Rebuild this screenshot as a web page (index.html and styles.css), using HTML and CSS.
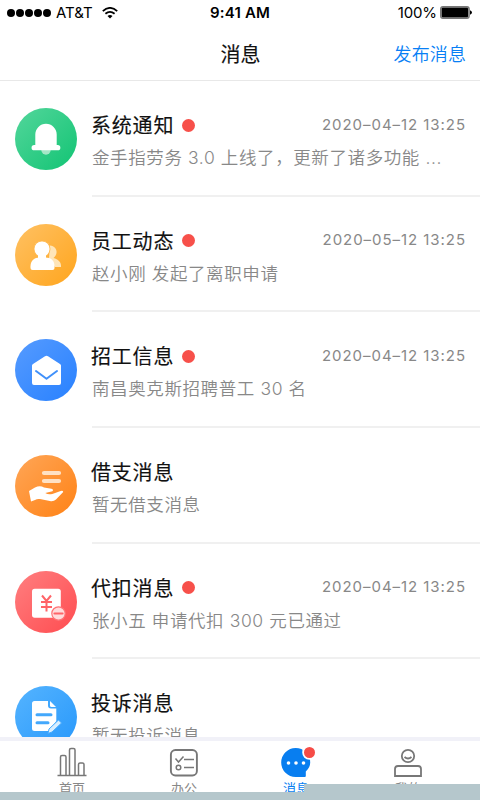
FILE: index.html
```html
<!DOCTYPE html>
<html lang="zh-CN">
<head>
<meta charset="utf-8">
<title>消息</title>
<link rel="stylesheet" href="styles.css">
</head>
<body>
<div class="screen">
  <header class="status">
    <div class="carrier">
      <span class="signal"><i></i><i></i><i></i><i></i><i></i></span>
      <span class="network">AT&amp;T</span>
      <svg class="wifi" width="16" height="12" viewBox="0 0 16 12" fill="none" stroke="#000" stroke-width="1.8"><path d="M.8 4.1Q8-2.3 15.2 4.1M3.4 6.8Q8 2.9 12.6 6.8"/><path d="M5.5 9Q8 7 10.5 9L8 11.5Z" fill="#000" stroke="none"/></svg>
    </div>
    <div class="clock">9:41 AM</div>
    <div class="power"><span>100%</span>
      <svg width="32" height="13" viewBox="0 0 32 13"><rect x=".6" y=".6" width="28.6" height="11.8" rx="2.4" fill="#999" stroke="#777" stroke-width="1.2"/><rect x="1.800" y="1.800" width="26.200" height="9.400" rx="1" /><path d="M30 4.3Q32 5 32 6.5T30 8.7Z"/></svg>
    </div>
  </header>
  <nav class="nav"><span></span><h1>消息</h1><a class="publish">发布消息</a></nav>

  <main class="list">
    <article class="item">
      <div class="icon green"><svg viewBox="0 0 62 62"><circle cx="31" cy="42" r="4.7" fill="#a5e6c6"/><path d="M20.3 37V26.500a10.7 10.7 0 0 1 21.400 0V37h1a2.6 2.6 0 0 1 0 5.3H19.2a2.6 2.6 0 0 1 0-5.3z" fill="#fff"/></svg></div>
      <div class="body"><div class="top"><h2>系统通知</h2><i class="dot"></i><time>2020–04–12 13:25</time></div><p>金手指劳务 3.0 上线了，更新了诸多功能 ...</p></div>
    </article>
    <article class="item">
      <div class="icon amber"><svg viewBox="0 0 62 62"><path d="M35 21.500c7.500 1 8.500 8.500 3.500 12.500 5 1.500 8 4 7.500 9H40l-6-9z" fill="#ffe5b8"/><path d="M15.500 44v-1.700c0-6 4-8.800 9-8.800h6c5.500 0 9 2.800 9 8.800V44a2 2 0 0 1-2 2h-20a2 2 0 0 1-2-2z" fill="#fff"/><circle cx="27" cy="25" r="8" fill="#fff" stroke="#ffb648" stroke-width=".8"/><path d="M23 30h8v5h-8z" fill="#fff"/></svg></div>
      <div class="body"><div class="top"><h2>员工动态</h2><i class="dot"></i><time>2020–05–12 13:25</time></div><p>赵小刚 发起了离职申请</p></div>
    </article>
    <article class="item">
      <div class="icon blue"><svg viewBox="0 0 62 62"><path d="M17 26.500q0-1 1-1.600l12-7.600q1.500-.9 3 0l12 7.600q1 .6 1 1.600V44q0 2-2 2H19q-2 0-2-2z" fill="#fff"/><path d="M21 32l10.500 7.700L42 32" fill="none" stroke="#4090fa" stroke-width="2" stroke-linecap="round" stroke-linejoin="round"/></svg></div>
      <div class="body"><div class="top"><h2>招工信息</h2><i class="dot"></i><time>2020–04–12 13:25</time></div><p>南昌奥克斯招聘普工 30 名</p></div>
    </article>
    <article class="item">
      <div class="icon orange"><svg viewBox="0 0 62 62"><path d="M29 18h15M29 26h15" stroke="#ffe1c4" stroke-width="4.200" stroke-linecap="round"/><path d="M14 36l6-3.500q5-2.500 9 0l7.500 1.200q2.500.8.900 2.600l-7.100 1.700q3 2 7 .9L45 36.200q3-1.200 3.200.8L41 44.500q-2 2-5 1.800L25 44q-3-.4-5 1l-4 1.500z" fill="#fff"/></svg></div>
      <div class="body"><div class="top"><h2>借支消息</h2></div><p>暂无借支消息</p></div>
    </article>
    <article class="item">
      <div class="icon red"><svg viewBox="0 0 62 62"><rect x="17" y="17.700" width="28.800" height="29" rx="2.700" fill="#fff"/><path d="M27 24.500l4.500 5.500 4.500-5.500M31.500 30v10.500M26 31h11M26 36h11" fill="none" stroke="#ff6468" stroke-width="2"/><circle cx="43.500" cy="42.500" r="6.700" fill="#ffdcdc" stroke="#ff7376" stroke-width="1.200"/><path d="M39.500 42.500h8" stroke="#ff6468" stroke-width="2.200" stroke-linecap="round"/></svg></div>
      <div class="body"><div class="top"><h2>代扣消息</h2><i class="dot"></i><time>2020–04–12 13:25</time></div><p>张小五 申请代扣 300 元已通过</p></div>
    </article>
    <article class="item">
      <div class="icon sky"><svg viewBox="0 0 62 62"><path d="M19.500 15H33v4.500a3 3 0 0 0 3 3h5.300V35L34 45H19.500a2.500 2.500 0 0 1-2.500-2.500v-25a2.500 2.500 0 0 1 2.500-2.500z" fill="#fff"/><path d="M35 15l6 6h-4.500q-1.500 0-1.500-1.500z" fill="#fff"/><path d="M22 28.800h14M22 36.700h11" stroke="#43a8fc" stroke-width="3" stroke-linecap="round"/><path d="M33 47.500l1-4.500 9.500-9 3 3L37 46z" fill="#d8eeff" stroke="#45aafd"/></svg></div>
      <div class="body"><div class="top"><h2>投诉消息</h2></div><p>暂无投诉消息</p></div>
    </article>
  </main>

  <footer class="tabs">
    <div class="tab"><svg width="30" height="32" viewBox="0 0 30 32" fill="none" stroke="#777" stroke-width="1.500"><path d="M.5 29.500h29M3.500 29V11q0-1.500 1.500-1.500h2.500Q9 9.500 9 11v18M12.500 29V4q0-1.500 1.500-1.500h2.500Q18 2.500 18 4v25M21.500 29V18.500q0-1.500 1.500-1.500h2.500q1.500 0 1.500 1.500V29"/></svg><span>首页</span></div>
    <div class="tab"><svg width="30" height="32" viewBox="0 0 30 32" fill="none" stroke="#777" stroke-width="1.500"><rect x="1.900" y="4" width="26" height="25.500" rx="4.500" stroke-width="1.900"/><path d="M6.500 12.500l3 3.500 5-5.500M15 13.500h10M15 21.500h10"/><circle cx="9.500" cy="21.500" r="2.300"/></svg><span>办公</span></div>
    <div class="tab active"><svg width="36" height="32" viewBox="0 0 36 32"><path d="M17.700 2a14.500 14.500 0 0 1 14.500 14.500q0 5-4.400 9V30q0 1-1 1h-9.100A14.500 14.500 0 0 1 17.700 2z" fill="#087ef0"/><g fill="#fff"><circle cx="10.500" cy="17" r="1.800"/><circle cx="18" cy="17" r="1.800"/><circle cx="25.500" cy="17" r="1.800"/></g><circle cx="31.500" cy="6.500" r="6.400" fill="#f64c47" stroke="#fff" stroke-width="1.800"/></svg><span>消息</span></div>
    <div class="tab"><svg width="30" height="32" viewBox="0 0 30 32" fill="none" stroke="#777" stroke-width="1.800"><circle cx="15" cy="10" r="6.200"/><path d="M11.500 11q3.500 3 7 0M2 30v-7q0-3 3-3h20q3 0 3 3v7z"/></svg><span>我的</span></div>
  </footer>
  <div class="edge"></div>
  <div class="edge-step"></div>
</div>
</body>
</html>
```
FILE: styles.css
```css
* { box-sizing: border-box; }
body { margin: 0; background: #fff; }
h1, h2, p { margin: 0; }
.screen {
  position: relative;
  width: 480px;
  height: 800px;
  overflow: hidden;
  display: flex;
  flex-direction: column;
  font-family: Inter, "Noto Sans CJK SC", sans-serif;
  color: #111;
}
.status {
  flex: none;
  height: 25px;
  padding: 0 8px 0 7px;
  display: grid;
  grid-template-columns: 1fr auto 1fr;
  align-items: center;
  font-size: 15px;
  color: #000;
}
.carrier, .power { display: flex; align-items: center; }
.signal { display: flex; gap: 1px; }
.signal i { width: 8px; height: 8px; border-radius: 50%; background: #000; }
.network { margin-left: 5px; }
.wifi { margin-left: 9px; }
.clock { font-weight: 600; letter-spacing: .2px; padding-left: 1px; }
.power { justify-content: flex-end; gap: 3px; letter-spacing: -.1px; }
.nav {
  flex: none;
  height: 56px;
  padding: 4px 14px 0 15px;
  border-bottom: 1px solid #e8e8e8;
  display: grid;
  grid-template-columns: 1fr auto 1fr;
  align-items: center;
}
.nav h1 { font-size: 20px; font-weight: 400; line-height: 30px; -webkit-text-stroke: .15px #111; }
.publish { justify-self: end; font-size: 18px; font-weight: 350; letter-spacing: .1px; color: #087ff5; line-height: 28px; }
.list { flex: none; height: 656px; overflow: hidden; }
.item { height: 115.65px; padding-left: 15px; display: flex; }
.icon { flex: none; width: 62px; height: 62px; margin-top: 27px; border-radius: 50%; }
.icon svg { display: block; width: 62px; height: 62px; }
.green { background: linear-gradient(135deg, #53d69b, #12c474); }
.amber { background: linear-gradient(135deg, #ffc163, #ffa51d); }
.blue { background: linear-gradient(135deg, #569bff, #2881ff); }
.orange { background: linear-gradient(135deg, #ffa657, #ff8215); }
.red { background: linear-gradient(135deg, #ff7f80, #ff4c50); }
.sky { background: linear-gradient(135deg, #55b4ff, #2898fb); }
.body {
  flex: 1;
  margin-left: 15px;
  padding: 28px 14px 0 0;
  border-bottom: 2px solid #f0f0f0;
}
.top { display: flex; align-items: center; height: 32px; margin-left: -1px; }
.top h2 { padding-top: 2px; font-size: 20px; font-weight: 400; letter-spacing: .8px; line-height: 32px; -webkit-text-stroke: .15px #111; }
.dot { width: 13px; height: 13px; border-radius: 50%; background: #f7504a; margin-left: 8px; }
.top time { margin-left: auto; font-size: 15px; letter-spacing: .95px; line-height: 20px; padding-bottom: 1px; color: #888; }
.item p {
  margin-top: 3px;
  font-size: 17.5px;
  font-weight: 350;
  letter-spacing: .6px;
  line-height: 28px;
  color: #888;
  white-space: nowrap;
}
.tabs {
  flex: none;
  height: 63px;
  padding: 0 16px;
  border-top: 4px solid #f1f1f8;
  display: grid;
  grid-template-columns: repeat(4, 1fr);
  background: #fff;
}
.tab { display: flex; flex-direction: column; align-items: center; padding-top: 5px; font-size: 13px; color: #888; }
.tab svg { flex: none; overflow: visible; }
.tab span { line-height: 19px; margin-top: 1px; }
.tab.active { color: #087ef0; }
.edge, .edge-step { position: absolute; right: 0; bottom: 0; background: #b5c7cc; }
.edge { left: 0; height: 8px; }
.edge-step { left: 304px; height: 16px; }
```
